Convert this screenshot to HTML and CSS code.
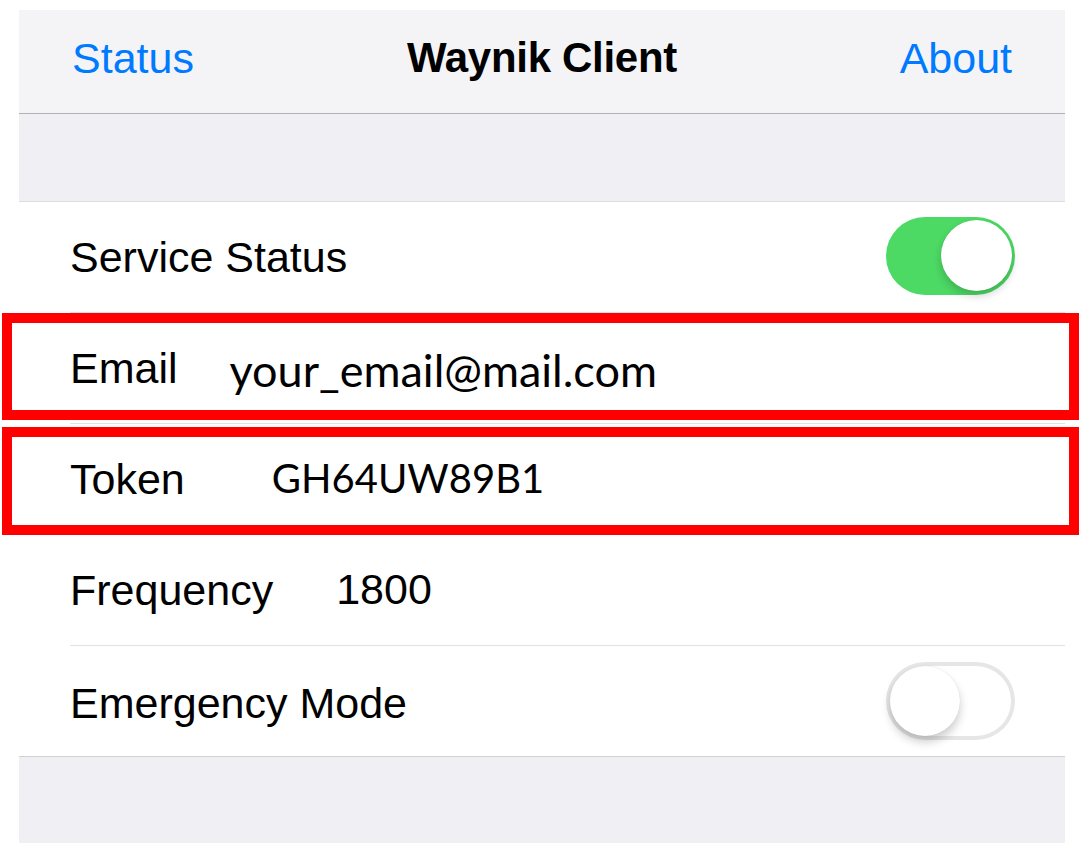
FILE: index.html
```html
<!DOCTYPE html>
<html lang="en">
<head>
<meta charset="utf-8">
<title>Waynik Client</title>
<link rel="stylesheet" href="styles.css">
</head>
<body>
<div class="screen">
  <header class="navbar">
    <a class="nav-btn nav-left">Status</a>
    <h1 class="nav-title">Waynik Client</h1>
    <a class="nav-btn nav-right">About</a>
  </header>
  <div class="section-gap"></div>
  <ul class="table">
    <li class="cell">
      <div class="cell-inner">
        <span class="label">Service Status</span>
        <span class="switch on"><span class="knob"></span></span>
      </div>
    </li>
    <li class="cell">
      <div class="cell-inner">
        <span class="label">Email</span>
        <span class="value value-email">your_email@mail.com</span>
      </div>
      <span class="highlight hl-email"></span>
    </li>
    <li class="cell">
      <div class="cell-inner">
        <span class="label">Token</span>
        <span class="value value-token">GH64UW89B1</span>
      </div>
      <span class="highlight hl-token"></span>
    </li>
    <li class="cell">
      <div class="cell-inner">
        <span class="label">Frequency</span>
        <span class="value-num">1800</span>
      </div>
    </li>
    <li class="cell">
      <div class="cell-inner">
        <span class="label label-low">Emergency Mode</span>
        <span class="switch off"><span class="knob"></span></span>
      </div>
    </li>
  </ul>
  <div class="section-gap bottom-gap"></div>
</div>
</body>
</html>
```

FILE: styles.css
```css
* {
  box-sizing: border-box;
}

html, body {
  margin: 0;
  padding: 0;
  background: #ffffff;
}

body {
  font-family: "Liberation Sans", Arial, sans-serif;
  color: #000;
}

.screen {
  width: 1046px;
  margin: 10px 0 0 19px;
}

/* Navigation bar */
.navbar {
  height: 104px;
  background: #f4f4f6;
  border-bottom: 1px solid #b2b2b2;
  display: grid;
  grid-template-columns: 1fr auto 1fr;
  align-items: center;
  padding: 0 53px 7px 53px;
}

.nav-btn {
  color: #007aff;
  font-size: 43px;
  line-height: 1;
}

.nav-left {
  justify-self: start;
}

.nav-right {
  justify-self: end;
}

.nav-title {
  margin: 0;
  font-size: 42px;
  font-weight: bold;
  line-height: 1;
  letter-spacing: -0.3px;
}

/* grouped table */
.section-gap {
  height: 88px;
  background: #efeff4;
  border-bottom: 1px solid #dcdce1;
}

.bottom-gap {
  height: 86px;
  border-bottom: none;
}

.table {
  list-style: none;
  margin: 0;
  padding: 0;
  background: #fff;
  border-bottom: 1px solid #cfcfd4;
}

.cell {
  position: relative;
  padding-left: 51px;
}

.cell-inner {
  height: 111px;
  display: flex;
  align-items: center;
  padding-right: 50px;
  border-bottom: 1px solid #e2e2e4;
}

.cell:last-child .cell-inner {
  height: 110px;
  border-bottom: none;
}

.label {
  font-size: 43px;
  line-height: 1;
  white-space: nowrap;
}

.label-low {
  margin-top: 4px;
}

.value {
  font-family: Lato, "Open Sans", sans-serif;
  line-height: 1;
  white-space: nowrap;
}

.value-email {
  font-size: 45px;
  margin-left: 52px;
  margin-top: 4px;
}

.value-token {
  font-size: 40px;
  margin-left: 87px;
  margin-top: -2px;
}

.value-num {
  font-size: 43px;
  line-height: 1;
  margin-left: 63px;
  margin-top: -2px;
}

/* switches */
.switch {
  margin-left: auto;
  flex-shrink: 0;
  width: 129px;
  height: 78px;
  border-radius: 39px;
  display: flex;
  align-items: center;
  padding: 0 3px 0 4px;
}

.switch.on {
  background: #4cd964;
  justify-content: flex-end;
  margin-top: -3px;
}

.switch.off {
  background: #fff;
  box-shadow: inset 0 0 0 4px #e6e6e6;
  justify-content: flex-start;
}

.knob {
  width: 71px;
  height: 71px;
  border-radius: 50%;
  background: #fff;
  box-shadow: 0 5px 8px rgba(0, 0, 0, 0.18), 0 0 1px rgba(0, 0, 0, 0.12);
}

.switch.off .knob {
  width: 70px;
  height: 70px;
  box-shadow: 0 6px 10px rgba(0, 0, 0, 0.2), 0 0 1px rgba(0, 0, 0, 0.15);
}

/* red annotation boxes */
.highlight {
  position: absolute;
  left: -17px;
  right: -14px;
  border: 10px solid #ff0000;
  pointer-events: none;
}

.hl-email {
  top: 0;
  height: 107px;
}

.hl-token {
  top: 3px;
  height: 108px;
}
```
